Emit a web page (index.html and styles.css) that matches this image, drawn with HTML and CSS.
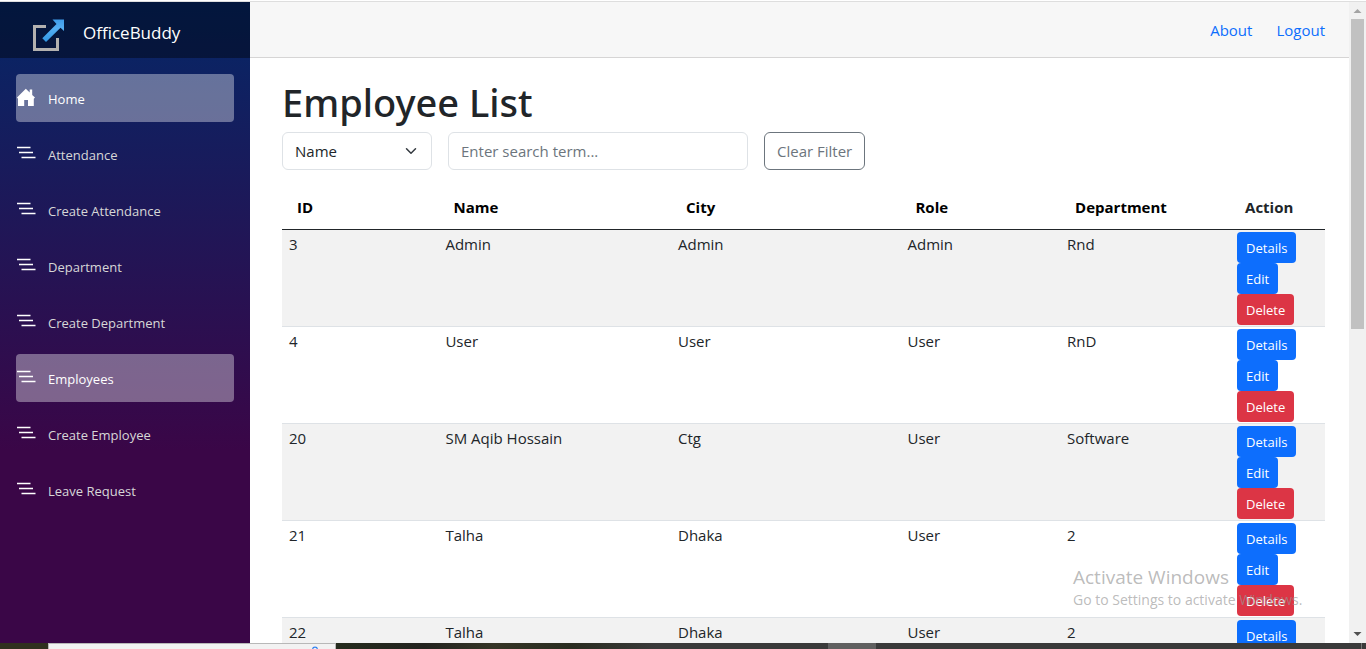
FILE: index.html
```html
<!DOCTYPE html>
<html lang="en">
<head>
<meta charset="utf-8">
<meta name="viewport" content="width=device-width, initial-scale=1">
<title>Employee List</title>
<link rel="stylesheet" href="styles.css">
</head>
<body>
<svg class="defs" aria-hidden="true">
  <symbol id="bars" viewBox="0 0 20 16"><path fill="none" stroke="currentColor" stroke-width="1.4" d="M1 3.5H14.5M3 8.5H17M5.500 13.500H19.500"/></symbol>
</svg>
<div class="screen">
  <div class="app">
    <aside class="sidebar">
      <div class="brand">
        <svg class="brand-logo" viewBox="0 0 34 34" aria-hidden="true">
          <defs><linearGradient id="arrow" x1="0" y1="0" x2="0" y2="1"><stop offset="0" stop-color="#3e9be8"/><stop offset=".4" stop-color="#55aef2"/><stop offset="1" stop-color="#2f96e3"/></linearGradient></defs>
          <path fill="none" stroke="#b3b1af" stroke-width="3" d="M15 8.500H3.500V31.500H26.500V20"/>
          <path fill="url(#arrow)" d="M21.500 1.500H33V13L29.500 9.800L15 24L11.300 20.300L25.500 6Z"/>
        </svg>
        <a class="brand-name" href="#">OfficeBuddy</a>
      </div>
      <nav class="menu">
        <a class="menu-link active" href="#"><svg class="menu-icon" viewBox="0 0 20 20" aria-hidden="true"><path fill="currentColor" d="M1 10.500L9.800 1.700L13.700 5.500V2.500H16.200V8L19 10.500L17.800 11.800V19H12V13H8.200V19H2V11.800Z"/></svg>Home</a>
        <a class="menu-link" href="#"><svg class="menu-icon bars" aria-hidden="true"><use href="#bars"/></svg>Attendance</a>
        <a class="menu-link" href="#"><svg class="menu-icon bars" aria-hidden="true"><use href="#bars"/></svg>Create Attendance</a>
        <a class="menu-link" href="#"><svg class="menu-icon bars" aria-hidden="true"><use href="#bars"/></svg>Department</a>
        <a class="menu-link" href="#"><svg class="menu-icon bars" aria-hidden="true"><use href="#bars"/></svg>Create Department</a>
        <a class="menu-link active" href="#"><svg class="menu-icon bars" aria-hidden="true"><use href="#bars"/></svg>Employees</a>
        <a class="menu-link" href="#"><svg class="menu-icon bars" aria-hidden="true"><use href="#bars"/></svg>Create Employee</a>
        <a class="menu-link" href="#"><svg class="menu-icon bars" aria-hidden="true"><use href="#bars"/></svg>Leave Request</a>
      </nav>
    </aside>
    <main class="main">
      <header class="topbar"><a href="#">About</a><a href="#">Logout</a></header>
      <article class="content">
        <h1>Employee List</h1>
        <form class="filters">
          <div class="select-wrap">
            <select class="field" aria-label="Filter by"><option>Name</option></select>
            <svg class="chevron" viewBox="0 0 16 16" aria-hidden="true"><path fill="none" stroke="#343a40" stroke-width="2" stroke-linecap="round" stroke-linejoin="round" d="m2 5 6 6 6-6"/></svg>
          </div>
          <input class="field search" type="text" placeholder="Enter search term..." aria-label="Search term">
          <button class="clear" type="button">Clear Filter</button>
        </form>
        <table class="grid">
          <colgroup><col class="c-id"><col class="c-name"><col class="c-city"><col class="c-role"><col class="c-dept"><col class="c-action"></colgroup>
          <thead><tr><th>ID</th><th>Name</th><th>City</th><th>Role</th><th>Department</th><th class="plain">Action</th></tr></thead>
          <tbody>
            <tr><td>3</td><td>Admin</td><td>Admin</td><td>Admin</td><td>Rnd</td><td><div class="actions"><button type="button">Details</button><button type="button">Edit</button><button class="danger" type="button">Delete</button></div></td></tr>
            <tr><td>4</td><td>User</td><td>User</td><td>User</td><td>RnD</td><td><div class="actions"><button type="button">Details</button><button type="button">Edit</button><button class="danger" type="button">Delete</button></div></td></tr>
            <tr><td>20</td><td>SM Aqib Hossain</td><td>Ctg</td><td>User</td><td>Software</td><td><div class="actions"><button type="button">Details</button><button type="button">Edit</button><button class="danger" type="button">Delete</button></div></td></tr>
            <tr><td>21</td><td>Talha</td><td>Dhaka</td><td>User</td><td>2</td><td><div class="actions"><button type="button">Details</button><button type="button">Edit</button><button class="danger" type="button">Delete</button></div></td></tr>
            <tr><td>22</td><td>Talha</td><td>Dhaka</td><td>User</td><td>2</td><td><div class="actions"><button type="button">Details</button></div></td></tr>
          </tbody>
        </table>
      </article>
    </main>
    <div class="scrollbar" aria-hidden="true">
      <svg class="scroll-arrow" viewBox="0 0 17 17"><path fill="#a3a3a3" d="M4.500 11L8.500 7L12.500 11Z"/></svg>
      <div class="track"><div class="thumb"></div></div>
      <svg class="scroll-arrow" viewBox="0 0 17 17"><path fill="#505050" d="M4.500 6L8.500 10L12.500 6Z"/></svg>
    </div>
  </div>
  <div class="taskbar" aria-hidden="true">
    <div class="task-start"></div>
    <div class="task-search"><svg viewBox="0 0 10 5"><path fill="none" stroke="#2d7ff0" stroke-width="2" d="M1 6a4 4 0 0 1 8 0"/></svg></div>
    <div class="task-apps"></div>
    <div class="task-current"></div>
    <div class="task-rest"></div>
  </div>
  <div class="watermark"><div class="watermark-title">Activate Windows</div><div>Go to Settings to activate Windows.</div></div>
</div>
</body>
</html>
```
FILE: styles.css
```css
* { box-sizing: border-box; }
body {
  margin: 0;
  font-family: "Segoe UI", "Open Sans", "Noto Sans", sans-serif;
  font-size: 15px;
  line-height: 24px;
  color: #212529;
  background: #fff;
}
a { text-decoration: none; color: #0d6efd; }
button, input, select { font: inherit; }
.defs { position: absolute; width: 0; height: 0; }

.screen {
  position: relative;
  display: flex;
  flex-direction: column;
  height: 100vh;
  overflow: hidden;
}
.app {
  display: flex;
  flex: 1;
  min-height: 0;
  padding-top: 2px;
  background: linear-gradient(#fff 1px, #dedede 1px, #dedede 2px, #fff 2px);
}

.sidebar {
  flex: 0 0 250px;
  background: linear-gradient(180deg, rgb(5, 39, 103) 0%, #3a0647 70%);
}
.brand {
  display: flex;
  align-items: center;
  gap: 18px;
  height: 56px;
  padding: 10px 32px 0 31px;
  background: rgba(0, 0, 0, 0.4);
}
.brand-logo { width: 34px; height: 34px; }
.brand-name {
  padding-bottom: 4px;
  font-size: 17px;
  color: #fff;
}
.menu {
  display: flex;
  flex-direction: column;
  gap: 8px;
  padding: 16px;
}
.menu-link {
  display: flex;
  align-items: center;
  gap: 12px;
  height: 48px;
  padding-top: 2px;
  border-radius: 4px;
  font-size: 13px;
  color: #d7d7d7;
}
.menu-link.active { color: #fff; background: rgba(255, 255, 255, 0.37); }
.menu-icon { width: 20px; height: 20px; margin-bottom: 5px; color: #fff; }
.menu-icon.bars { height: 16px; margin-bottom: 6px; }

.main { flex: 1; min-width: 0; overflow: hidden; background: #fff; }
.topbar {
  display: flex;
  justify-content: flex-end;
  align-items: center;
  gap: 24px;
  height: 56px;
  padding: 0 24px;
  background: #f7f7f7;
  border-bottom: 1px solid #d6d5d5;
}
.content { padding: 20px 24px 0 32px; }
h1 {
  margin: 0 0 6px;
  font-family: "Segoe UI", "Noto Sans", "Open Sans", sans-serif;
  font-size: 38px;
  font-weight: 500;
  line-height: 48px;
}
.filters { display: flex; gap: 16px; margin-bottom: 16px; }
.field {
  height: 38px;
  padding: 0 12px;
  border: 1px solid #dee2e6;
  border-radius: 6px;
  color: #212529;
  background: #fff;
}
.select-wrap { position: relative; flex: 0 0 150px; }
.select-wrap .field { width: 100%; appearance: none; }
.chevron {
  position: absolute;
  top: 13px;
  right: 15px;
  width: 12px;
  height: 12px;
  pointer-events: none;
}
.search { flex: 0 0 300px; min-width: 0; }
.search::placeholder { color: #6c757d; opacity: 1; }
.clear {
  height: 38px;
  padding: 0 12px;
  border: 1px solid #6c757d;
  border-radius: 6px;
  color: #6c757d;
  background: #fff;
}

.grid { width: 100%; border-collapse: separate; border-spacing: 0; table-layout: fixed; }
.c-id { width: 15%; }
.c-name { width: 22.3%; }
.c-city { width: 22%; }
.c-role { width: 15.3%; }
.c-dept { width: 16.3%; }
.c-action { width: 9.1%; }
th {
  height: 44px;
  padding: 0 0 2px 15px;
  border-bottom: 1px solid #212529;
  text-align: left;
  font-weight: 700;
  color: #000;
}
th.plain { color: #212529; }
td {
  padding: 2px 0 1px 7px;
  border-bottom: 1px solid #dee2e6;
  vertical-align: top;
}
tbody tr:nth-child(odd) { background: #f2f2f2; }
.actions { display: flex; flex-direction: column; align-items: flex-start; }
.actions button {
  height: 31px;
  padding: 0 9px;
  border: 0;
  border-radius: 4px;
  font-size: 13px;
  color: #fff;
  background: #0d6efd;
}
.actions .danger { background: #dc3545; }

.scrollbar {
  display: flex;
  flex-direction: column;
  flex: 0 0 17px;
  background: #f1f1f1;
}
.scroll-arrow { display: block; width: 17px; height: 17px; }
.track { flex: 1; padding: 0 2px; }
.thumb { height: 51%; background: #c1c1c1; }

.taskbar { display: flex; flex: 0 0 6px; height: 6px; background: #3a3a3a; }
.task-start { flex: 0 0 48px; background: #30301f; }
.task-search {
  display: flex;
  justify-content: flex-end;
  flex: 0 0 288px;
  padding: 2px 15px 0 0;
  border: 1px solid #b8b8b8;
  border-bottom: 0;
  background: #f2f2f2;
}
.task-search svg { width: 10px; height: 3px; }
.task-apps { flex: 0 0 492px; background: linear-gradient(90deg, #252b1d, #23231f 18%, #353526 32%, #292c20 48%, #3a3a3a 65%); }
.task-current { flex: 0 0 48px; background: #606060; }
.task-rest { flex: 1; margin-right: 4px; border-right: 1px solid #777; }

.watermark {
  position: absolute;
  right: 57px;
  bottom: 37px;
  width: 236px;
  font-size: 14px;
  white-space: nowrap;
  color: rgba(150, 150, 150, 0.65);
  pointer-events: none;
}
.watermark-title { font-size: 19px; line-height: 22px; }
```
